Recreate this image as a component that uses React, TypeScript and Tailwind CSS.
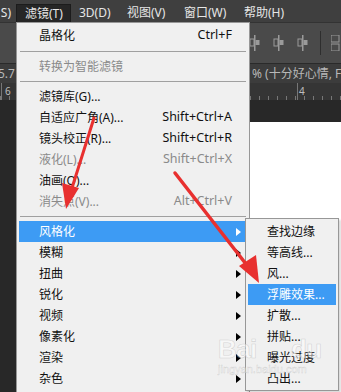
import React from "react";

const FONT = { fontFamily: '"Noto Sans", "Noto Sans CJK SC", sans-serif' };

type Item =
  | { sep: true; h?: number }
  | { sep?: false; label: string; shortcut?: string; disabled?: boolean; sub?: boolean; active?: boolean };

const mainItems: Item[] = [
  { label: "晶格化", shortcut: "Ctrl+F" },
  { sep: true, h: 10 },
  { label: "转换为智能滤镜", disabled: true },
  { sep: true },
  { label: "滤镜库(G)..." },
  { label: "自适应广角(A)...", shortcut: "Shift+Ctrl+A" },
  { label: "镜头校正(R)...", shortcut: "Shift+Ctrl+R" },
  { label: "液化(L)...", shortcut: "Shift+Ctrl+X", disabled: true },
  { label: "油画(O)..." },
  { label: "消失点(V)...", shortcut: "Alt+Ctrl+V", disabled: true },
  { sep: true },
  { label: "风格化", sub: true, active: true },
  { label: "模糊", sub: true },
  { label: "扭曲", sub: true },
  { label: "锐化", sub: true },
  { label: "视频", sub: true },
  { label: "像素化", sub: true },
  { label: "渲染", sub: true },
  { label: "杂色", sub: true },
];

const subItems = [
  { label: "查找边缘" },
  { label: "等高线..." },
  { label: "风..." },
  { label: "浮雕效果...", active: true },
  { label: "扩散..." },
  { label: "拼贴..." },
  { label: "曝光过度" },
  { label: "凸出..." },
];

function Arrow({ white }: { white?: boolean }) {
  return (
    <svg width="5" height="8" viewBox="0 0 5 8" className="absolute right-[8px] top-[7px]">
      <path d="M0 0 L5 4 L0 8 Z" fill={white ? "#ffffff" : "#000000"} />
    </svg>
  );
}

function AlignIcon() {
  return (
    <svg width="14" height="16" viewBox="0 0 14 16">
      <rect x="6" y="0" width="1.5" height="16" fill="#9a9a9a" />
      <rect x="2" y="4" width="4" height="7" fill="none" stroke="#9a9a9a" strokeWidth="1" />
      <rect x="7.5" y="5" width="4" height="5" fill="#9a9a9a" />
    </svg>
  );
}

export default function App() {
  return (
    <div className="relative w-[341px] h-[392px] overflow-hidden bg-white" style={FONT}>
      {/* Menu bar */}
      <div className="flex h-[22px] bg-[#3f3f3f] text-[12px] text-[#e6e6e6] items-end">
        <div className="w-[16px] h-[18px] flex items-center justify-end pr-[5px] overflow-hidden whitespace-nowrap">S)</div>
        <div className="w-[55px] h-[18px] flex items-center pl-[8px] bg-[#262626] border border-b-0 border-[#1c1c1c]">滤镜(T)</div>
        <div className="h-[18px] flex items-center pl-[8px] w-[48px]">3D(D)</div>
        <div className="h-[18px] flex items-center pl-[8px] w-[57px]">视图(V)</div>
        <div className="h-[18px] flex items-center pl-[8px] w-[60px]">窗口(W)</div>
        <div className="h-[18px] flex items-center pl-[8px]">帮助(H)</div>
      </div>

      {/* Workspace */}
      <div className="flex flex-col">
        <div className="h-[41px] bg-[#4a4a4a] border-t border-[#333] flex items-center gap-[10px] pl-[248px]">
          <AlignIcon />
          <AlignIcon />
          <AlignIcon />
          <div className="w-[1px] h-[24px] bg-[#2e2e2e]" />
          <svg width="10" height="16" viewBox="0 0 10 16">
            <rect x="0" y="0" width="8" height="7" fill="none" stroke="#9a9a9a" />
            <rect x="0" y="9" width="8" height="7" fill="none" stroke="#9a9a9a" />
          </svg>
        </div>
        <div className="h-[20px] bg-[#3c3c3c] border-t border-[#2a2a2a] flex items-center text-[12px] text-[#b8b8b8] relative">
          <span className="absolute left-[-2px] w-[18px] overflow-hidden whitespace-nowrap">5.7</span>
          <span className="absolute left-[252px] whitespace-nowrap">% (十分好心情, F</span>
        </div>
        <div className="h-[17px] bg-[#353535] relative text-[10px] text-[#bdbdbd]">
          <span className="absolute left-[5px] top-[1px]">6</span>
          <span className="absolute left-[299px] top-[1px]">4</span>
          <div className="absolute left-[297px] top-0 w-[1px] h-[17px] bg-[#777]" />
          <div className="absolute left-[1px] top-0 w-[1px] h-[17px] bg-[#777]" />
          <div
            className="absolute left-[250px] right-0 bottom-0 h-[4px]"
            style={{ backgroundImage: "repeating-linear-gradient(90deg, #777 0 1px, transparent 1px 9px)" }}
          />
          <div
            className="absolute left-[0px] w-[16px] bottom-0 h-[4px]"
            style={{ backgroundImage: "repeating-linear-gradient(90deg, #777 0 1px, transparent 1px 9px)" }}
          />
        </div>
        <div className="h-[22px] bg-[#282828]" />
        <div className="flex h-[270px]">
          <div className="w-[16px] bg-[#282828]" />
          <div className="flex-1 bg-white" />
        </div>
      </div>

      {/* Main dropdown */}
      <div className="absolute left-[16px] top-[22px] w-[234px] h-[380px] bg-[#f0f0f0] border border-[#979797] pt-[2px] text-[12px]">
        {mainItems.map((it, i) =>
          it.sep ? (
            <div key={i} className="flex items-center px-[3px]" style={{ height: it.h ?? 9 }}>
              <div className="h-[1px] w-full bg-[#a0a0a0]" />
            </div>
          ) : (
            <div key={i} className="relative h-[21px]">
              <div
                className={
                  "absolute inset-y-0 left-[2px] right-[3px] flex items-center pl-[20px] pr-[14px] " +
                  (it.active ? "bg-[#3d9bf4] text-white" : it.disabled ? "text-[#8a8a8a]" : "text-[#111]")
                }
              >
                <span className="flex-1 whitespace-nowrap">{it.label}</span>
                {it.shortcut && <span className="whitespace-nowrap text-[12.5px]">{it.shortcut}</span>}
              </div>
              {it.sub && <Arrow white={it.active} />}
            </div>
          )
        )}
      </div>

      {/* Submenu */}
      <div className="absolute left-[245px] top-[218px] w-[94px] h-[173px] bg-[#f0f0f0] border border-[#979797] pt-[2px] text-[12px] shadow-[2px_2px_2px_rgba(0,0,0,0.15)]">
        {subItems.map((it, i) => (
          <div
            key={i}
            className={
              "h-[21px] mx-[2px] flex items-center pl-[19px] whitespace-nowrap " +
              (it.active ? "bg-[#3d9bf4] text-white" : "text-[#111]")
            }
          >
            {it.label}
          </div>
        ))}
      </div>

      {/* Watermark */}
      <div className="absolute left-[218px] top-[336px] pointer-events-none select-none">
        <div className="text-[26px] font-bold leading-none text-[#ffffff]/50 tracking-tight" style={{ fontFamily: '"Liberation Sans", sans-serif', WebkitTextStroke: "0.6px rgba(170,170,170,0.45)" }}>
          Bai<span className="mx-[14px]"> </span>du
        </div>
        <div className="text-[11px] leading-none mt-[2px] text-[#ffffff]/50" style={{ fontFamily: '"Liberation Sans", sans-serif', WebkitTextStroke: "0.4px rgba(150,150,150,0.4)" }}>
          jingyan.baidu.com
        </div>
      </div>

      {/* Red arrows */}
      <svg className="absolute inset-0 pointer-events-none" width="341" height="392" viewBox="0 0 341 392">
        <line x1="94" y1="118" x2="72" y2="188" stroke="#e8302f" strokeWidth="3" strokeLinecap="round" />
        <polygon points="62,183 79,188 66,209" fill="#e8302f" />
        <line x1="175" y1="173" x2="246" y2="264" stroke="#e8302f" strokeWidth="3.5" strokeLinecap="round" />
        <polygon points="239,266 256,255 259,283" fill="#e8302f" />
      </svg>
    </div>
  );
}
